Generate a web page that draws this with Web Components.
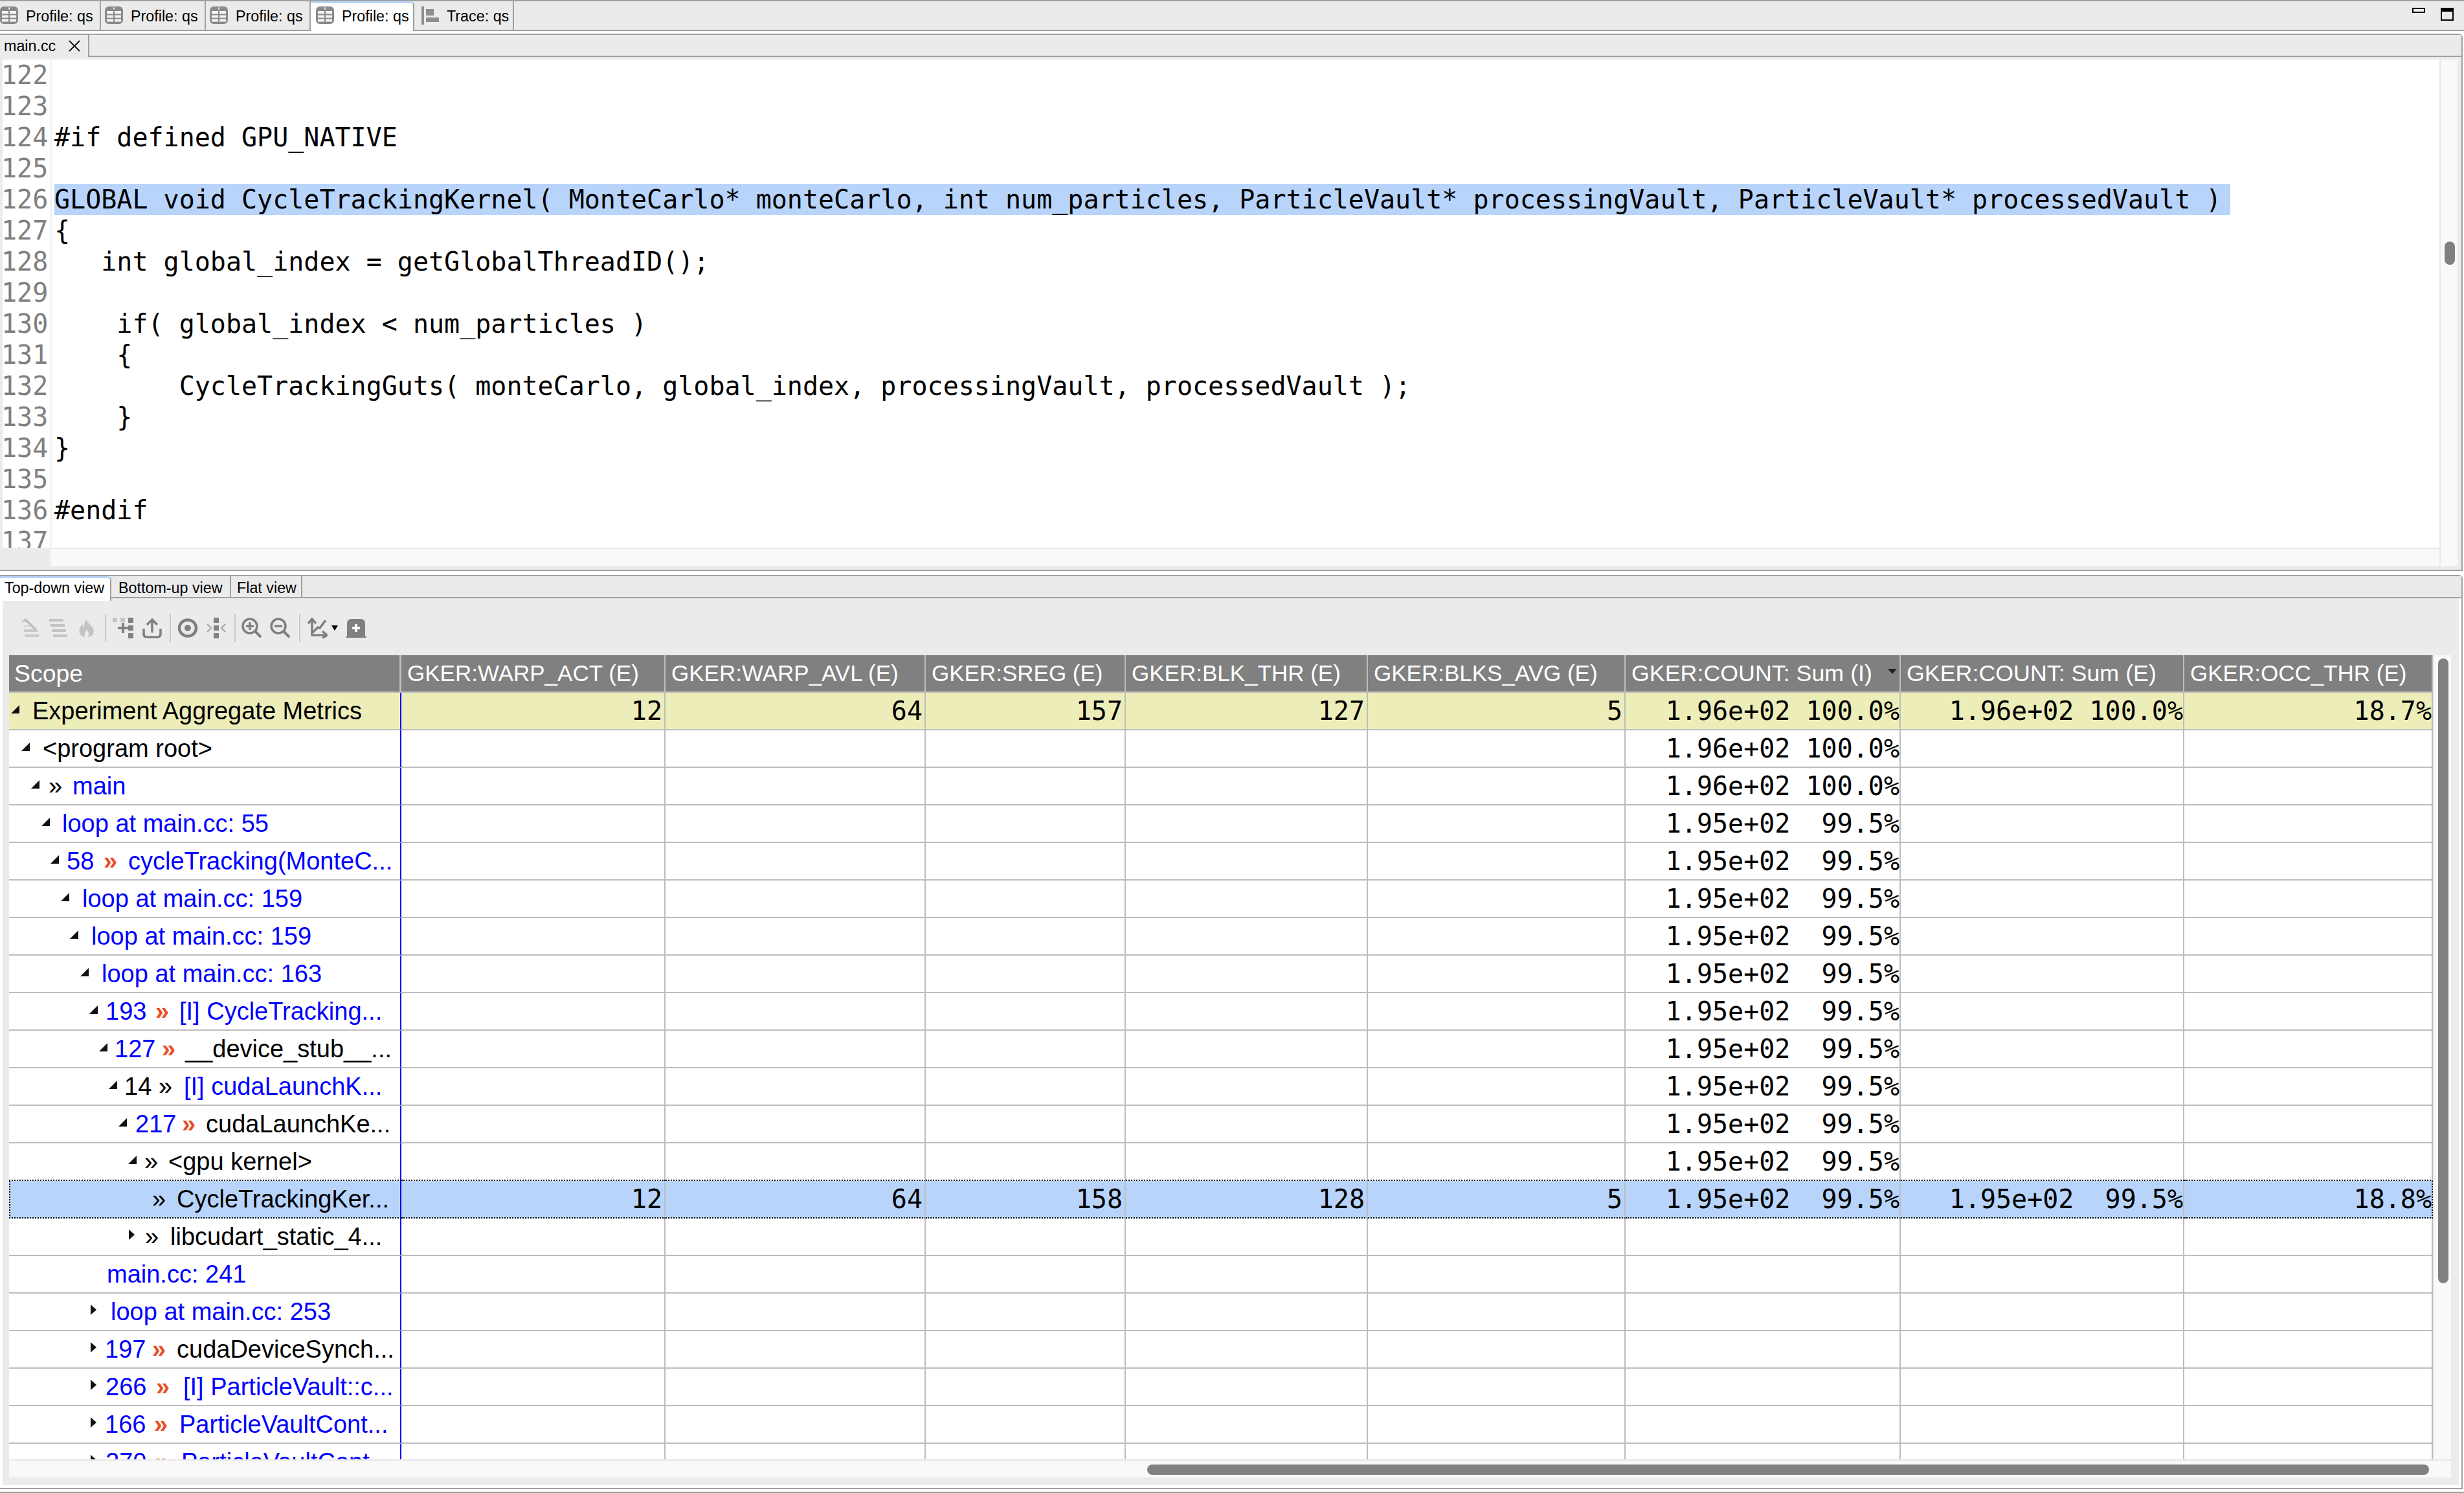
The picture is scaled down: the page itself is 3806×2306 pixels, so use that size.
<!DOCTYPE html>
<html lang="en"><head><meta charset="utf-8"><title>Profile: qs</title>
<style>
html,body{margin:0;padding:0;background:#fff}
body{width:3806px;height:2306px;overflow:hidden;font-family:"Liberation Sans",Arial,sans-serif}
</style></head>
<body>
<hpc-app></hpc-app>
<script>
const SANS='"Liberation Sans",Arial,sans-serif', MONO='"DejaVu Sans Mono","Liberation Mono",monospace';
const LINE='#a0a0a0', PANEL='#ebebeb', GRID='#bdbdbd', THUMB='#808080', TRACK='#f9f9f9', SEL='#b8d4fb';
function comp(name,html,init){
  customElements.define(name,class extends HTMLElement{
    constructor(){super();this.attachShadow({mode:'open'}).innerHTML=html;}
    connectedCallback(){if(init&&!this._done){this._done=true;init.call(this,this.shadowRoot);}}
  });
}
const ICONS={
 table:`<svg width="28" height="27" viewBox="0 0 28 27"><rect width="28" height="27" rx="6" fill="#8a8a8a"/><rect x="13.2" y="1.5" width="1.6" height="3" fill="#fff"/><g fill="#f4f4f4"><rect x="3" y="7" width="10" height="4.5"/><rect x="15" y="7" width="10" height="4.5"/><rect x="3" y="13.5" width="10" height="4"/><rect x="15" y="13.5" width="10" height="4"/><rect x="3" y="19.5" width="10" height="4"/><rect x="15" y="19.5" width="10" height="4"/></g></svg>`,
 trace:`<svg width="27" height="28" viewBox="0 0 27 28"><g fill="#8e8e8e"><rect x="0" y="0" width="4" height="28"/><rect x="7" y="4" width="12" height="10"/><rect x="7" y="17" width="20" height="7"/></g></svg>`,
 t1:`<svg width="32" height="32" viewBox="0 0 32 32" fill="#cacaca"><rect x="4" y="4" width="8" height="3"/><rect x="7" y="11" width="14" height="3" opacity=".6"/><rect x="7" y="18" width="21" height="4"/><rect x="8" y="26" width="22" height="4"/><path d="M8 2 L25 18" stroke="#bcbcbc" stroke-width="3.5" fill="none"/></svg>`,
 t2:`<svg width="32" height="32" viewBox="0 0 32 32" fill="#c4c4c4"><rect x="2" y="2" width="22" height="4"/><rect x="4" y="10" width="22" height="4"/><rect x="6" y="18" width="22" height="4"/><rect x="8" y="26" width="22" height="4"/></svg>`,
 t3:`<svg width="32" height="32" viewBox="0 0 32 32"><path d="M15 2 C16 8 21 9 25 15 C29 22 26 29 18 30 C20 26 19 22 16 18 C14 22 12 24 13 30 C6 29 3 23 5 17 C6 14 8 12 9 10 C10 13 11 14 12 14 C12 9 13 5 15 2Z" fill="#c4c4c4"/></svg>`,
 t4:`<svg width="32" height="32" viewBox="0 0 32 32" fill="#808080"><rect x="0" y="0" width="7" height="7" fill="#c4c4c4"/><rect x="12" y="0" width="7" height="7" fill="#c4c4c4"/><rect x="24" y="0" width="8" height="8"/><rect x="24" y="12" width="8" height="8"/><rect x="24" y="24" width="8" height="8"/><rect x="8" y="14" width="16" height="4"/><rect x="14" y="8" width="4" height="16"/></svg>`,
 t5:`<svg width="32" height="32" viewBox="0 0 32 32" fill="none" stroke="#808080" stroke-width="3.6"><path d="M3 17 V25 Q3 30 8 30 H24 Q29 30 29 25 V17"/><path d="M16 23 V4 M8 11 L16 3 L24 11"/></svg>`,
 t6:`<svg width="32" height="32" viewBox="0 0 32 32"><ellipse cx="16" cy="16" rx="13" ry="12.5" fill="none" stroke="#808080" stroke-width="4.5"/><circle cx="16" cy="16" r="5" fill="#808080"/></svg>`,
 t7:`<svg width="32" height="32" viewBox="0 0 32 32" fill="#808080"><rect x="12" y="0" width="8" height="8"/><rect x="12" y="12" width="8" height="8"/><rect x="12" y="24" width="8" height="8"/><path d="M2 10 L8 16 L2 22" fill="none" stroke="#a8a8a8" stroke-width="2.4"/><path d="M30 10 L24 16 L30 22" fill="none" stroke="#a8a8a8" stroke-width="2.4"/></svg>`,
 t8:`<svg width="32" height="32" viewBox="0 0 32 32" fill="none" stroke="#808080" stroke-width="3.6"><circle cx="13" cy="13" r="11"/><path d="M21 21 L30 30" stroke-width="4"/><path d="M7 13 H19 M13 7 V19" stroke-width="3.4"/></svg>`,
 t9:`<svg width="32" height="32" viewBox="0 0 32 32" fill="none" stroke="#808080" stroke-width="3.6"><circle cx="13" cy="13" r="11"/><path d="M21 21 L30 30" stroke-width="4"/><path d="M7 13 H19" stroke-width="3.4"/></svg>`,
 t10:`<svg width="32" height="32" viewBox="0 0 32 32" fill="none" stroke="#808080" stroke-width="3.6"><path d="M8 3 V27 H29"/><path d="M2 9 L8 2 L14 9"/><path d="M24 21 L31 27 L24 32"/><path d="M9 23 L17 15 L20 16 L29 4"/></svg>`,
 t11:`<svg width="32" height="30" viewBox="0 0 32 30"><path d="M2 28 V8 Q2 1 9 1 H23 Q30 1 30 8 V28 H32 V30 H0 V28Z" fill="#808080"/><rect x="10" y="13" width="12" height="4" fill="#fff"/><rect x="14" y="9" width="4" height="12" fill="#fff"/></svg>`
};

comp('tab-item',`<style>
:host{display:flex;align-items:center;box-sizing:border-box;border-right:2px solid ${LINE};padding:var(--pt,2px) 0 0 var(--pad,6px);
 width:var(--w,162px);font:23.3px ${SANS};color:#000;background:${PANEL};white-space:nowrap}
:host([active]){background:#fff;border-top:3px solid ${SEL};margin-bottom:-2px;border-top-right-radius:6px;position:relative;padding-top:0;padding-bottom:var(--pb,3px)}
.i{display:flex;flex:0 0 auto;margin:-3px 12px 0 0}
</style><span class="i"></span><slot></slot>`,function(r){
  const k=this.getAttribute('icon');
  if(k) r.querySelector('.i').innerHTML=ICONS[k]; else r.querySelector('.i').remove();
  if(this.hasAttribute('w')) this.style.setProperty('--w',this.getAttribute('w')+'px');
  if(this.hasAttribute('pad')) this.style.setProperty('--pad',this.getAttribute('pad')+'px');
  if(this.hasAttribute('ml')) this.style.marginLeft=this.getAttribute('ml')+'px';
});

comp('perspective-bar',`<style>
:host{display:flex;box-sizing:border-box;height:48px;background:${PANEL};border-top:2px solid ${LINE};border-bottom:2px solid ${LINE}}
.sp{flex:1}
.ctl{display:flex;gap:24px;padding:10px 16px 0 0;align-items:flex-start}
.min{box-sizing:border-box;width:20px;height:8px;border:2px solid #000}
.max{box-sizing:border-box;width:20px;height:20px;border:2px solid #000;border-top-width:6px}
</style><slot></slot><span class="sp"></span><span class="ctl"><span class="min"></span><span class="max"></span></span>`);

comp('v-track',`<style>
:host{display:block;box-sizing:border-box;background:${TRACK};border-left:2px solid #e8e8e8;
 padding:var(--top,0) var(--r,4px) 0 var(--l,6px);height:100%}
.t{height:var(--len,36px);background:${THUMB};border-radius:8px}
</style><div class="t"></div>`);

comp('h-track',`<style>
:host{display:block;box-sizing:border-box;background:${TRACK};border-top:2px solid #e8e8e8;padding:var(--top,6px) 0 0 var(--start,0)}
.t{width:var(--len,100px);height:16px;background:${THUMB};border-radius:8px}
</style><div class="t"></div>`);

comp('code-editor',`<style>
:host{display:grid;grid-template-columns:78px 2px 1fr 28px 6px;grid-template-rows:754px 28px 1fr;
 background:${PANEL};font:40px/48px ${MONO};padding:0}
.gut{background:linear-gradient(90deg,${PANEL} 4px,#fff 4px);color:#808080;overflow:hidden;grid-column:1;grid-row:1;box-sizing:border-box;padding-left:2px}
.rule{grid-column:2;grid-row:1;background:#f0f0f0}
.code{grid-column:3;grid-row:1;background:#fff;overflow:hidden;padding-left:4px;color:#000}
.l{height:48px;white-space:pre}
.hl{display:inline-block;background:${SEL};padding-right:14px;height:48px}
.vt{grid-column:4;grid-row:1 / span 2;--top:281px;--len:36px;--l:6px;--r:4px}
h-track{grid-column:2 / span 2;grid-row:2}
.n{height:48px}
</style><div class="gut"></div><div class="rule"></div><div class="code"></div><v-track class="vt"></v-track><h-track style="--len:0px"></h-track>`,function(r){
  const src=['','','#if defined GPU_NATIVE','',
  'GLOBAL void CycleTrackingKernel( MonteCarlo* monteCarlo, int num_particles, ParticleVault* processingVault, ParticleVault* processedVault )',
  '{','   int global_index = getGlobalThreadID();','','    if( global_index < num_particles )','    {',
  '        CycleTrackingGuts( monteCarlo, global_index, processingVault, processedVault );','    }','}','','#endif',''];
  const g=r.querySelector('.gut'),c=r.querySelector('.code');
  src.forEach((t,i)=>{
    const n=document.createElement('div');n.className='n';n.textContent=122+i;g.append(n);
    const l=document.createElement('div');l.className='l';
    if(i===4){const s=document.createElement('span');s.className='hl';s.textContent=t;l.append(s);}else l.textContent=t;
    c.append(l);
  });
});

comp('editor-pane',`<style>
:host{display:grid;grid-template-rows:34px 1fr;box-sizing:border-box;width:3804px;height:830px;margin-top:4px;
 border:solid ${LINE};border-width:2px 2px 2px 0;border-top-right-radius:6px;background:${PANEL}}
.bar{display:flex;border-bottom:2px solid ${LINE};background:${PANEL};box-sizing:border-box;height:34px}
.tab{display:flex;align-items:center;box-sizing:border-box;width:138px;height:34px;padding-left:6px;border-right:2px solid ${LINE};font:23.3px ${SANS};color:#000;background:${PANEL}}
.x{margin-left:20px;display:flex}
.body{padding-top:4px;display:block}
</style><div class="bar"><div class="tab">main.cc<span class="x"><svg width="18" height="18" viewBox="0 0 18 18"><path d="M1 1 L17 17 M17 1 L1 17" stroke="#111" stroke-width="1.8" fill="none"/></svg></span></div></div><div class="body"><code-editor style="height:786px"></code-editor></div>`);

comp('tool-bar',`<style>
:host{display:flex;align-items:center;box-sizing:border-box;height:88px;padding:0 0 0 20px;background:${PANEL}}
.b{display:flex;justify-content:center;align-items:center;width:44px;height:32px;margin-top:4px}
.s{width:2px;height:44px;background:#c9c9c9}
.d{width:0;height:0;border:5px solid transparent;border-top:8px solid #000;border-bottom:0;margin:4px 6px 0 0}
</style>`,function(r){
  const seq=[['t1'],['t2'],['t3'],['s',6,4],['t4'],['t5',1],['s',5,4],['t6'],['t7'],['s',6,3],['t8'],['t9'],['s',7,4],['t10'],['d'],['t11']];
  seq.forEach(x=>{
    const e=document.createElement('span');
    if(x[0]==='s'){e.className='s';e.style.margin=`4px ${x[2]}px 0 ${x[1]}px`;}
    else if(x[0]==='d'){e.className='d';}
    else{e.className='b';e.innerHTML=ICONS[x[0]];if(x[1])e.style.marginLeft=x[1]+'px';}
    r.append(e);
  });
});

function tri(kind){
  return kind==='d'
   ?`<svg width="13" height="13" viewBox="0 0 13 13" style="display:block;margin-top:-6px"><polygon points="13,0 13,13 0,13" fill="#111"/></svg>`
   :`<svg width="9" height="16" viewBox="0 0 9 16" style="display:block;margin-top:-6px"><polygon points="0,0 9,8 0,16" fill="#111"/></svg>`;
}

comp('metric-row',`<style>
:host{display:grid;grid-template-columns:var(--cols);height:58px;font:38px ${SANS};color:#000;background:#fff}
:host([kind=total]){background:#ededb9}
:host([kind=sel]){background:${SEL}}
.c{box-sizing:border-box;border-right:2px solid ${GRID};border-bottom:2px solid ${GRID};display:flex;align-items:center;justify-content:flex-end;
 font:40px ${MONO};white-space:pre;color:#000;min-width:0}
.c.int{padding-right:3px}
.c.scope{justify-content:flex-start;border-right-color:#0000ff;font:38px ${SANS};overflow:hidden}
:host([kind=sel]) .c,:host([above]) .c{border-bottom:2px dotted #000}
:host([kind=sel]) .c.scope{border-left:2px dotted #000}
:host([kind=sel]) .c:last-child{border-right:2px dotted #000}
.p{flex:0 0 auto;white-space:pre}
.blue{color:#0000ff}.org{color:#e8502a;font-weight:700}
</style>`,function(r){
  const d=this.data, scope=document.createElement('div');
  scope.className='c scope';
  const P=d.parts, first=P.length?P[0].x:14;
  scope.style.paddingLeft=(first-14-(d.kind==='sel'?2:0))+'px';
  P.forEach((p,i)=>{
    const s=document.createElement('span');s.className='p';
    if(i<P.length-1) s.style.width=(P[i+1].x-p.x)+'px';
    if(p.tri) s.innerHTML=tri(p.tri);
    else { s.textContent=p.t; if(p.c) s.classList.add(p.c); }
    scope.append(s);
  });
  r.append(scope);
  for(let i=0;i<8;i++){
    const c=document.createElement('div');c.className='c'+(i<5?' int':'');c.textContent=(d.vals&&d.vals[i])||'';r.append(c);
  }
});

comp('metric-header',`<style>
:host{display:grid;grid-template-columns:var(--cols);height:58px;background:${THUMB}}
.h{box-sizing:border-box;height:58px;border-right:2px solid ${GRID};border-bottom:2px solid ${GRID};display:flex;align-items:center;justify-content:space-between;
 padding:0 4px 0 9px;color:#fff;font:35px ${SANS};white-space:nowrap;overflow:hidden}
.h.s{font-size:37.4px;border-right-width:3px;padding-left:8px}
.h.w{font-size:35.8px}
.a{width:0;height:0;border:7px solid transparent;border-top:8px solid #222;border-bottom:0;margin:-6px 0 0}
</style>`,function(r){
  ['Scope','GKER:WARP_ACT (E)','GKER:WARP_AVL (E)','GKER:SREG (E)','GKER:BLK_THR (E)','GKER:BLKS_AVG (E)','GKER:COUNT: Sum (I)','GKER:COUNT: Sum (E)','GKER:OCC_THR (E)'].forEach((t,i)=>{
    const h=document.createElement('div');h.className='h'+(i===0?' s':'')+(i===6||i===7?' w':'');
    const s=document.createElement('span');s.textContent=t;h.append(s);
    if(i===6){const a=document.createElement('span');a.className='a';h.append(a);}
    r.append(h);
  });
});

comp('metric-table',`<style>
:host{display:block;--cols:606px 408px 402px 309px 374px 398px 425px 438px 384px;width:3744px;height:1242px;overflow:hidden;background:#fff}
.body{height:1184px;overflow:hidden}
</style><metric-header></metric-header><div class="body"></div>`,function(r){
  const L=(x,t,c)=>({x,t,c}),T=(k,x)=>({x,tri:k}),B='blue',O='org';
  const c96='1.96e+02 100.0%',c95='1.95e+02  99.5%';
  const v=a=>[,,,,,a];
  const rows=[
   {kind:'total',parts:[T('d',17),L(50,'Experiment Aggregate Metrics')],vals:['12','64','157','127','5',c96,c96,'18.7%']},
   {parts:[T('d',33),L(66,'<program root>')],vals:v(c96)},
   {parts:[T('d',48),L(75,'»'),L(112,'main',B)],vals:v(c96)},
   {parts:[T('d',64),L(96,'loop at main.cc: 55',B)],vals:v(c95)},
   {parts:[T('d',78),L(103,'58',B),L(160,'»',O),L(198,'cycleTracking(MonteC...',B)],vals:v(c95)},
   {parts:[T('d',94),L(127,'loop at main.cc: 159',B)],vals:v(c95)},
   {parts:[T('d',108),L(141,'loop at main.cc: 159',B)],vals:v(c95)},
   {parts:[T('d',124),L(157,'loop at main.cc: 163',B)],vals:v(c95)},
   {parts:[T('d',138),L(163,'193',B),L(240,'»',O),L(277,'[I] CycleTracking...',B)],vals:v(c95)},
   {parts:[T('d',153),L(177,'127',B),L(250,'»',O),L(286,'__device_stub__...')],vals:v(c95)},
   {parts:[T('d',168),L(192,'14'),L(245,'»'),L(284,'[I] cudaLaunchK...',B)],vals:v(c95)},
   {parts:[T('d',183),L(209,'217',B),L(281,'»',O),L(318,'cudaLaunchKe...')],vals:v(c95)},
   {above:1,parts:[T('d',198),L(223,'»'),L(260,'<gpu kernel>')],vals:v(c95)},
   {kind:'sel',parts:[L(235,'»'),L(273,'CycleTrackingKer...')],vals:['12','64','158','128','5',c95,c95,'18.8%']},
   {parts:[T('r',199),L(224,'»'),L(263,'libcudart_static_4...')]},
   {parts:[L(165,'main.cc: 241',B)]},
   {parts:[T('r',140),L(171,'loop at main.cc: 253',B)]},
   {parts:[T('r',140),L(162,'197',B),L(235,'»',O),L(273,'cudaDeviceSynch...')]},
   {parts:[T('r',140),L(163,'266',B),L(241,'»',O),L(283,'[I] ParticleVault::c...',B)]},
   {parts:[T('r',140),L(162,'166',B),L(238,'»',O),L(277,'ParticleVaultCont...',B)]},
   {parts:[T('r',140),L(163,'270',B),L(240,'»',O),L(280,'ParticleVaultCont...',B)]}
  ];
  const body=r.querySelector('.body');
  rows.forEach(d=>{
    const e=document.createElement('metric-row');e.data=d;
    if(d.kind)e.setAttribute('kind',d.kind);
    if(d.above)e.setAttribute('above','');
    body.append(e);
  });
});

comp('view-pane',`<style>
:host{display:block;box-sizing:border-box;width:3804px;height:1412px;margin-top:6px;
 border:solid ${LINE};border-width:2px 2px 2px 0;border-top-right-radius:6px;background:#fff}
.bar{display:flex;height:34px;box-sizing:border-box;border-bottom:2px solid ${LINE};background:${PANEL};position:relative;z-index:1}
.bar tab-item{height:32px;--pt:4px}
.bar tab-item[active]{height:38px;margin-bottom:-6px;--pb:5px}
.inner{margin:0 4px;height:1370px;background:${PANEL};display:block;box-sizing:border-box}
.grid{display:grid;grid-template-columns:3744px 2px 26px;grid-template-rows:1242px 28px;padding-left:10px}
.edge{background:#e8e8e8}
v-track{border-left:0;--top:5px;--len:965px;--l:6px;--r:4px}
h-track{grid-column:1 / span 3;--top:6px;--start:1758px;--len:1980px}
</style><div class="bar"><tab-item active w="172" pad="7">Top-down view</tab-item><tab-item w="185" pad="11">Bottom-up view</tab-item><tab-item w="110" pad="9">Flat view</tab-item></div>
<div class="inner"><tool-bar></tool-bar><div class="grid"><metric-table></metric-table><div class="edge"></div><v-track></v-track><h-track></h-track></div></div>`);

comp('hpc-app',`<style>
:host{display:block;width:3806px;height:2306px;background:#fff;overflow:hidden}
.status{height:2px;margin-top:4px;background:${LINE}}
</style><perspective-bar>
<tab-item icon="table" ml="-6">Profile: qs</tab-item><tab-item icon="table">Profile: qs</tab-item><tab-item icon="table">Profile: qs</tab-item><tab-item icon="table" active w="160" pad="8">Profile: qs</tab-item><tab-item icon="trace" w="154" pad="11">Trace: qs</tab-item>
</perspective-bar><editor-pane></editor-pane><view-pane></view-pane><div class="status"></div>`);
</script>
</body></html>
